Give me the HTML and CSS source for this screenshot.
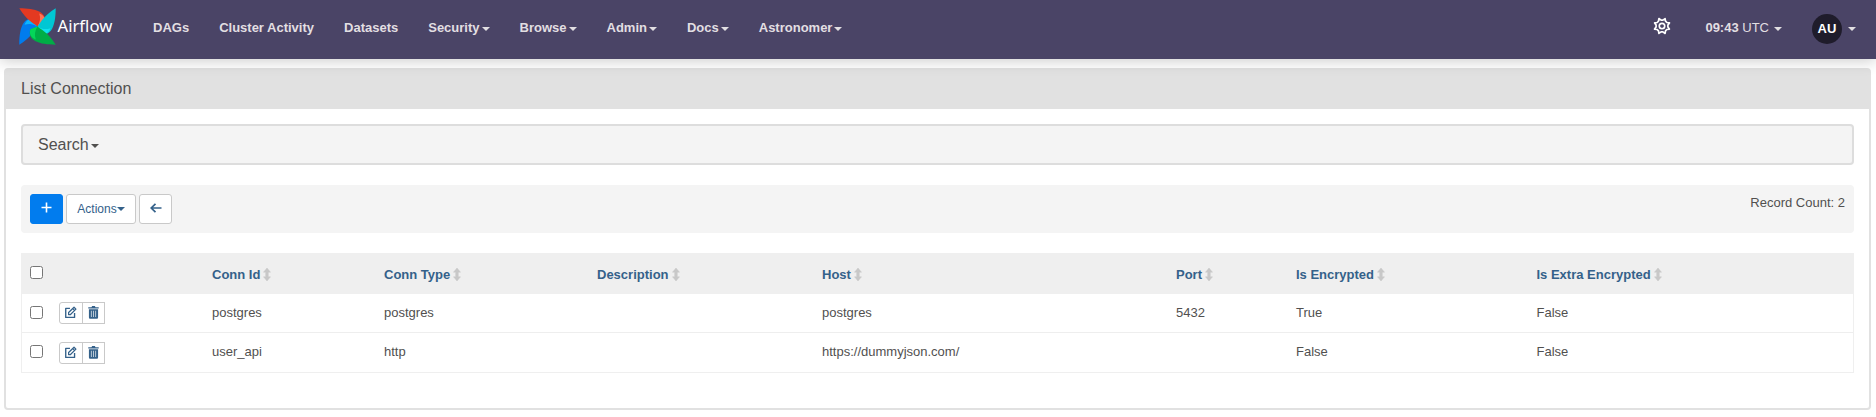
FILE: index.html
```
<!DOCTYPE html>
<html lang="en">
<head>
<meta charset="utf-8">
<title>List Connection - Airflow</title>
<link rel="stylesheet" href="styles.css">
</head>
<body>
<svg class="defs" width="0" height="0">
  <symbol id="sort" viewBox="0 0 8 13"><path d="M4 0L7.500 4.200H5.300V8.800H7.500L4 13L.5 8.800H2.700V4.200H.5Z" stroke="#c8c8c8" stroke-width=".5" stroke-linejoin="round"/></symbol>
  <symbol id="edit" viewBox="0 0 24 24"><path d="M11 4.500H3.200V21H19.500V13" fill="none" stroke="currentColor" stroke-width="2.500" stroke-linejoin="round"/><path d="M8.500 15.700V12L18.500 2.200L22 5.700L12 15.700Z" fill="none" stroke="currentColor" stroke-width="2.300" stroke-linejoin="round"/><path d="M16 4.700L19.500 8.200" stroke="currentColor" stroke-width="2"/></symbol>
  <symbol id="trash" viewBox="0 0 12 14"><path fill-rule="evenodd" d="M.3 1.200H3.800L4.500 0H7.500L8.200 1.200H11.700V2.600H.3ZM1 3.400H11V12.500Q11 13.800 9.800 13.800H2.200Q1 13.800 1 12.500ZM3.200 5V12H3.900V5ZM5.650 5V12H6.350V5ZM8.100 5V12H8.800V5Z"/></symbol>
  <path id="petal" d="M.3 .3C16 .3 29 4 25.300 15.500L18.300 18.300C13.500 14.500 8 12.500 .3 .3Z"/>
  <path id="petal-tip" d="M20 5.500C25.500 7.500 26.500 11.500 25.300 15.500L18.300 18.300C21 14 21.500 10 20 5.500Z"/>
</svg>
<nav class="navbar">
  <a class="brand">
    <svg class="logo" width="37" height="37" viewBox="0 0 36.600 36.600">
      <g transform="rotate(270 18.300 18.300)"><use href="#petal" fill="#017cee"/><use href="#petal-tip" fill="#0cb6ff"/></g>
      <g><use href="#petal" fill="#e43921"/><use href="#petal-tip" fill="#ff7557"/></g>
      <g transform="rotate(90 18.300 18.300)"><use href="#petal" fill="#00c7d4"/><use href="#petal-tip" fill="#11e1ee"/></g>
      <g transform="rotate(180 18.300 18.300)"><use href="#petal" fill="#00ad46"/><use href="#petal-tip" fill="#04d659"/></g>
    </svg>
    <span class="brand-name">Airflow</span>
  </a>
  <div class="menu">
    <a>DAGs</a>
    <a>Cluster Activity</a>
    <a>Datasets</a>
    <a>Security<i class="caret"></i></a>
    <a>Browse<i class="caret"></i></a>
    <a>Admin<i class="caret"></i></a>
    <a>Docs<i class="caret"></i></a>
    <a>Astronomer<i class="caret"></i></a>
  </div>
  <svg class="gear" width="18" height="18" viewBox="-9 -9 18 18" fill="none" stroke="#fff" stroke-width="1.700" stroke-linejoin="round">
    <path d="M-1.400 -5.800L0 -8L1.400 -5.800L3.100 -5.100L5.700 -5.700L5.100 -3.100L5.800 -1.400L8 0L5.800 1.400L5.100 3.100L5.700 5.700L3.100 5.100L1.400 5.800L0 8L-1.400 5.800L-3.100 5.100L-5.700 5.700L-5.100 3.100L-5.800 1.400L-8 0L-5.800 -1.400L-5.100 -3.100L-5.700 -5.700L-3.100 -5.100Z" transform="rotate(22.500)"/>
    <circle r="2.700"/>
  </svg>
  <a class="clock"><b>09:43</b> UTC<i class="caret"></i></a>
  <a class="user"><span class="avatar">AU</span><i class="caret"></i></a>
</nav>
<main class="panel">
  <h1 class="panel-title">List Connection</h1>
  <div class="panel-body">
    <div class="search">Search<i class="caret"></i></div>
    <div class="toolbar">
      <button class="btn primary"><svg width="11" height="11" viewBox="0 0 11 11"><path d="M5.500 .5V10.500M.5 5.500H10.500" stroke="currentColor" stroke-width="1.600"/></svg></button>
      <button class="btn actions">Actions<i class="caret"></i></button>
      <button class="btn back"><svg width="12" height="10" viewBox="0 0 12 10"><path d="M5.500 .8L1.200 5L5.500 9.200M1.200 5H11.500" fill="none" stroke="currentColor" stroke-width="1.700"/></svg></button>
      <span class="count">Record Count: 2</span>
    </div>
    <table class="list">
      <colgroup><col class="c-check"><col class="c-tools"><col class="c-id"><col class="c-type"><col class="c-desc"><col class="c-host"><col class="c-port"><col class="c-enc"><col></colgroup>
      <thead>
        <tr>
          <th><input type="checkbox"></th><th></th>
          <th>Conn Id<svg class="sort"><use href="#sort"/></svg></th>
          <th>Conn Type<svg class="sort"><use href="#sort"/></svg></th>
          <th>Description<svg class="sort"><use href="#sort"/></svg></th>
          <th>Host<svg class="sort"><use href="#sort"/></svg></th>
          <th>Port<svg class="sort"><use href="#sort"/></svg></th>
          <th>Is Encrypted<svg class="sort"><use href="#sort"/></svg></th>
          <th>Is Extra Encrypted<svg class="sort"><use href="#sort"/></svg></th>
        </tr>
      </thead>
      <tbody>
        <tr class="first">
          <td><input type="checkbox"></td>
          <td class="tool-cell"><div class="tools"><button><svg width="13" height="13"><use href="#edit"/></svg></button><button><svg width="11" height="13"><use href="#trash"/></svg></button></div></td>
          <td>postgres</td><td>postgres</td><td></td><td>postgres</td><td>5432</td><td>True</td><td>False</td>
        </tr>
        <tr class="second">
          <td><input type="checkbox"></td>
          <td class="tool-cell"><div class="tools"><button><svg width="13" height="13"><use href="#edit"/></svg></button><button><svg width="11" height="13"><use href="#trash"/></svg></button></div></td>
          <td>user_api</td><td>http</td><td></td><td>https://dummyjson.com/</td><td></td><td>False</td><td>False</td>
        </tr>
      </tbody>
    </table>
  </div>
</main>
</body>
</html>
```
FILE: styles.css
```
* { box-sizing: border-box; }
body { margin: 0; background: #fff; color: #51504f; font: 13px/18px "Liberation Sans", Arial, sans-serif; height: 417px; overflow: hidden; }
.defs { position: absolute; }
.navbar { position: relative; display: flex; height: 59px; padding-left: 19px; background: #4a4466; color: #e2dfe2; box-shadow: 0 2px 14px rgba(0, 0, 0, .2); }
.brand { display: flex; width: 119px; }
.logo { margin-top: 7.500px; }
.brand-name { margin: 15px 0 0 1.500px; font: 16.700px/22px "Noto Sans", sans-serif; color: #fff; }
.menu { display: flex; flex: 1; }
.menu a { padding: 19px 15px; font-weight: bold; }
.caret { display: inline-block; margin-left: 2px; vertical-align: middle; border: 4px solid transparent; border-top-color: currentColor; border-bottom: 0; }
.gear { margin: 17px 34px 0 0; }
.clock { padding: 19px 15px 0 0; }
.clock .caret { margin-left: 5px; }
.user { display: flex; align-items: center; height: 30px; margin: 14px 20px 0 15px; }
.user .caret { margin-left: 6px; }
.avatar { width: 30px; height: 30px; border-radius: 50%; background: #1f1c2b; color: #fff; font: bold 13px/30px "Liberation Sans", Arial, sans-serif; text-align: center; }
.panel { height: 342px; margin: 9px 5px 0 4px; border: 2px solid #e1e1e1; border-radius: 4px; }
.panel-title { margin: 0; height: 39px; padding: 9px 15px; background: #e1e1e1; font-size: 16px; line-height: 20px; font-weight: normal; }
.panel-body { padding: 15px; }
.search { height: 41px; margin-bottom: 20px; padding: 8px 15px; border: 2px solid #ddd; border-radius: 4px; background: #f4f4f4; font-size: 16px; line-height: 22px; }
.toolbar { display: flex; gap: 3px; height: 48px; margin-bottom: 20px; padding: 9px; border-radius: 4px; background: #f4f4f4; }
.btn { display: flex; align-items: center; justify-content: center; width: 33px; height: 30px; padding: 0; border: 1px solid #c9c9c9; border-radius: 3px; background: #fff; color: #34618a; font: 12px/18px "Liberation Sans", Arial, sans-serif; }
.primary { padding-bottom: 3px; border-color: #017cee; background: #017cee; color: #fff; }
.back { padding-bottom: 2px; }
.actions { width: 70px; }
.actions .caret { margin-left: 0; }
.count { margin-left: auto; }
.list { width: 100%; height: 120px; table-layout: fixed; border-collapse: separate; border-spacing: 0; border: 1px solid #efefef; }
.list th, .list td { padding: 10px 8px 0; text-align: left; vertical-align: top; white-space: nowrap; }
.list th { height: 40px; padding-top: 12px; background: #efefef; color: #34618a; }
.list td { height: 39px; }
.list .first td { border-bottom: 1px solid #eee; }
.list input { display: block; width: 13px; height: 13px; margin: 0; }
.list td input { margin-top: 2px; }
.list .first .tool-cell { padding-top: 8px; }
.list .second .tool-cell { padding-top: 9px; }
.c-check { width: 29px; }
.c-tools { width: 153px; }
.c-id { width: 172px; }
.c-type { width: 213px; }
.c-desc { width: 225px; }
.c-host { width: 354px; }
.c-port { width: 120px; }
.c-enc { width: 240.500px; }
.sort { width: 8px; height: 13px; margin-left: 3px; vertical-align: -2px; fill: #c8c8c8; }
.tools { display: flex; }
.tools button { display: flex; align-items: center; justify-content: center; width: 24px; height: 22px; padding: 0 1px 1px 0; border: 1px solid #c9c9c9; background: #fff; color: #34618a; fill: currentColor; }
.tools button:first-child { border-radius: 3px 0 0 3px; }
.tools button + button { width: 23px; margin-left: -1px; padding: 0 0 1px; }
```
